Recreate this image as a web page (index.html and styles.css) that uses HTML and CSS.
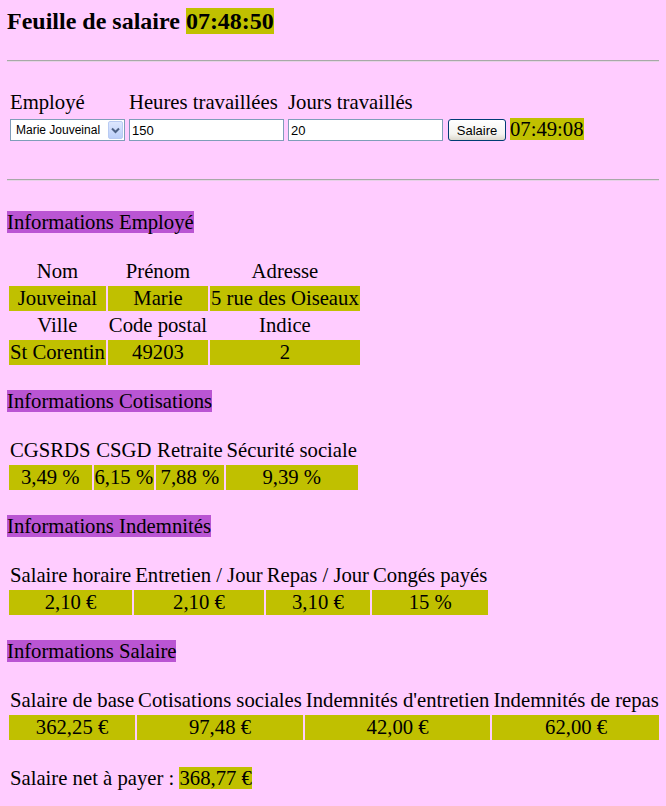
FILE: index.html
```html
<!DOCTYPE html>
<html>
<head>
    <title>Feuille de salaire</title>
    <link rel="stylesheet" href="styles.css">
</head>
<body>
    <h1 class="page-title">Feuille de salaire <span class="clock">07:48:50</span></h1>
    <hr class="rule rule-top">

    <form class="salary-form">
        <table class="form-table">
            <tr>
                <td>Employé</td>
                <td>Heures travaillées</td>
                <td>Jours travaillés</td>
            </tr>
            <tr>
                <td>
                    <span class="select-wrap">
                        <select class="employee-select">
                            <option>Marie Jouveinal</option>
                        </select>
                        <span class="select-arrow">
                            <svg width="15" height="18" viewBox="0 0 15 18">
                                <path d="M4 7.5 L7.5 11 L11 7.5" fill="none" stroke="#4d6185" stroke-width="2"/>
                            </svg>
                        </span>
                    </span>
                </td>
                <td><input type="text" class="field" value="150"></td>
                <td><input type="text" class="field" value="20"></td>
                <td><button type="button" class="btn">Salaire</button></td>
                <td><span class="clock">07:49:08</span></td>
            </tr>
        </table>
    </form>

    <hr class="rule rule-bottom">

    <div class="section-title first"><span>Informations Employé</span></div>
    <table class="data-table">
        <tr>
            <td>Nom</td>
            <td>Prénom</td>
            <td>Adresse</td>
        </tr>
        <tr>
            <td class="value">Jouveinal</td>
            <td class="value">Marie</td>
            <td class="value">5 rue des Oiseaux</td>
        </tr>
        <tr>
            <td>Ville</td>
            <td>Code postal</td>
            <td>Indice</td>
        </tr>
        <tr>
            <td class="value">St Corentin</td>
            <td class="value">49203</td>
            <td class="value">2</td>
        </tr>
    </table>

    <div class="section-title"><span>Informations Cotisations</span></div>
    <table class="data-table">
        <tr>
            <td>CGSRDS</td>
            <td>CSGD</td>
            <td>Retraite</td>
            <td>Sécurité sociale</td>
        </tr>
        <tr>
            <td class="value">3,49 %</td>
            <td class="value">6,15 %</td>
            <td class="value">7,88 %</td>
            <td class="value">9,39 %</td>
        </tr>
    </table>

    <div class="section-title"><span>Informations Indemnités</span></div>
    <table class="data-table">
        <tr>
            <td>Salaire horaire</td>
            <td>Entretien / Jour</td>
            <td>Repas / Jour</td>
            <td>Congés payés</td>
        </tr>
        <tr>
            <td class="value">2,10 €</td>
            <td class="value">2,10 €</td>
            <td class="value">3,10 €</td>
            <td class="value">15 %</td>
        </tr>
    </table>

    <div class="section-title"><span>Informations Salaire</span></div>
    <table class="data-table">
        <tr>
            <td>Salaire de base</td>
            <td>Cotisations sociales</td>
            <td>Indemnités d'entretien</td>
            <td>Indemnités de repas</td>
        </tr>
        <tr>
            <td class="value">362,25 €</td>
            <td class="value">97,48 €</td>
            <td class="value">42,00 €</td>
            <td class="value">62,00 €</td>
        </tr>
    </table>

    <div class="net-pay">Salaire net à payer : <span class="clock">368,77 €</span></div>
</body>
</html>
```

FILE: styles.css
```css
body {
    margin: 7px;
    background-color: #ffccff;
    color: #000;
    font-family: "Liberation Serif", "Times New Roman", serif;
    font-size: 20.7px;
    line-height: 23px;
}

.page-title {
    margin: 0;
    font-size: 24px;
    font-weight: bold;
    line-height: 28px;
}

.clock {
    background-color: #c0c000;
}

.rule {
    height: 0;
    margin: 0;
    border: 0;
    border-top: 1px solid #a8a8a8;
    border-bottom: 1px solid #e6d0e6;
}

.rule-top {
    margin-top: 25px;
}

.form-table {
    margin-top: 26px;
    margin-bottom: 35px;
    border-spacing: 2px;
}

.form-table td {
    padding: 1px;
    white-space: nowrap;
}

.select-wrap {
    position: relative;
    display: inline-block;
    vertical-align: bottom;
}

.employee-select {
    display: block;
    width: 115px;
    height: 22px;
    margin: 0;
    padding: 0 0 0 5px;
    border: 1px solid #7f9db9;
    background-color: #fff;
    font-family: "Liberation Sans", Arial, sans-serif;
    font-size: 12px;
    color: #000;
    appearance: none;
    -webkit-appearance: none;
    border-radius: 0;
}

.select-arrow {
    position: absolute;
    top: 2px;
    right: 2px;
    width: 15px;
    height: 18px;
    box-sizing: border-box;
    border: 1px solid #b9cbf3;
    border-radius: 2px;
    background: linear-gradient(#dde7fe, #bccff9);
}

.select-arrow svg {
    display: block;
    margin: -1px;
}

.field {
    width: 155px;
    height: 22px;
    box-sizing: border-box;
    margin: 0;
    padding: 0 2px;
    border: 1px solid #7f9db9;
    background-color: #fff;
    font-family: "Liberation Sans", Arial, sans-serif;
    font-size: 13px;
    color: #000;
    vertical-align: bottom;
}

.btn {
    width: 58px;
    height: 22px;
    margin: 0 0 0 1px;
    padding: 0;
    border: 1px solid #003c74;
    border-radius: 3px;
    background: linear-gradient(#ffffff, #f4f4f0 70%, #dcd8cc);
    font-family: "Liberation Sans", Arial, sans-serif;
    font-size: 13px;
    color: #000;
    vertical-align: bottom;
    cursor: pointer;
}

.section-title {
    margin-bottom: 23px;
}

.section-title.first {
    margin-top: 30px;
}

.section-title span {
    background-color: #ba55d3;
}

.data-table {
    border-spacing: 2px;
    margin-bottom: 23px;
}

.data-table td {
    padding: 1px;
    text-align: center;
    white-space: nowrap;
}

.data-table td.value {
    background-color: #c0c000;
}

.net-pay {
    margin-top: 25px;
    padding-left: 3px;
}
```
